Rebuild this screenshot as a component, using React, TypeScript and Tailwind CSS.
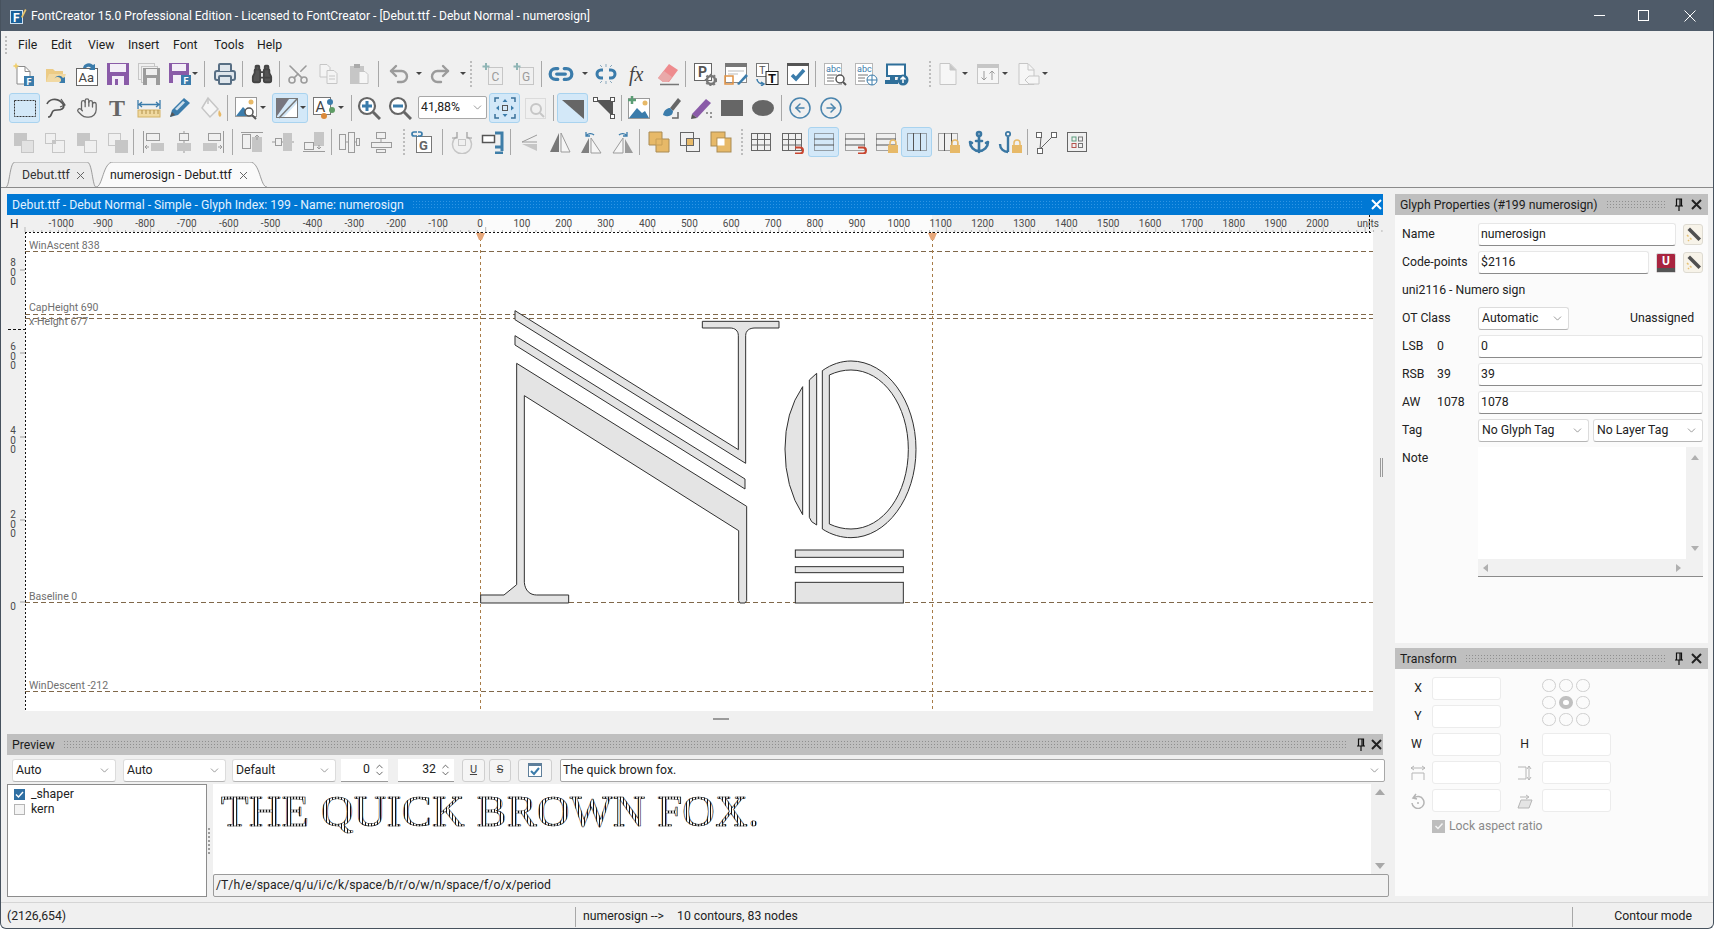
import type { ReactNode } from 'react';
import { Anchor, Binoculars, ChevronDown, ChevronUp, CircleArrowLeft, CircleArrowRight, Hand, Link2, Printer, Scissors, Undo2, Redo2 } from 'lucide-react';

const G = '#c6c6c6';
const L = '#9b9b9b';
const B = '#3b7cab';
const P = '#8a5ba8';
const Y = '#e7b968';

function Svg({ children }: { children: ReactNode }) {
  return (
    <svg width="24" height="24" viewBox="0 0 24 24" fill="none">
      {children}
    </svg>
  );
}

const Lock = () => (
  <>
    <path d="M16 15v-2a3 3 0 0 1 6 0v2" stroke={Y} strokeWidth="1.5" />
    <rect x="14" y="15" width="10" height="8" fill={Y} />
  </>
);
const Magnet = () => <path d="M15 17.500h5a3 3 0 0 1 0 6h-5" stroke="#c8452f" strokeWidth="2" />;
const GridH = () => (
  <>
    <rect x="2.500" y="3.500" width="19" height="17" stroke="#555" strokeDasharray="1 1" />
    <path d="M2 9h20M2 15h20" stroke="#555" />
  </>
);
const GridV = () => (
  <>
    <rect x="2.500" y="3.500" width="19" height="17" stroke="#555" strokeDasharray="1 1" />
    <path d="M8.500 3v18M15.500 3v18" stroke="#555" />
  </>
);
const Grid = () => (
  <>
    <rect x="2.500" y="3.500" width="19" height="17" stroke="#666" />
    <path d="M2 9.500h20M2 15h20M8.500 3v18M15.500 3v18" stroke="#666" />
  </>
);

const icons: Record<string, ReactNode> = {
  new: (
    <Svg>
      <g transform="translate(-2 0)">
        <path d="M6 4.500h8l5 5V22H6z" fill="#fff" stroke="#8a8a8a" />
        <path d="M14 4.500v5h5" stroke="#8a8a8a" />
        <path d="M5 0.500l1 2.500 2.500 1-2.500 1-1 2.500-1-2.500L1.500 4l2.500-1z" fill="#f1cf6b" />
        <rect x="13" y="14" width="10" height="10" fill={B} />
        <text x="15.500" y="22.500" fontSize="9" fontWeight="700" fill="#fff">F</text>
      </g>
    </Svg>
  ),
  open: (
    <Svg>
      <path d="M2 7h7l2 2h8v11H2z" fill="#eccb85" />
      <path d="M2 20l3-8h17l-3 8z" fill="#f1d9a3" />
      <path d="M10 18a5 5 0 0 1 9-2l2-1v6h-6l2-2a3 3 0 0 0-7-1z" fill={B} />
    </Svg>
  ),
  font: (
    <Svg>
      <rect x="1.500" y="6.500" width="21" height="17" fill="#fff" stroke="#666" />
      <text x="3.500" y="20" fontSize="13" fill="#444">Aa</text>
      <path d="M8 6a6 6 0 0 1 10-3l2-1v6h-6l2-2a3 3 0 0 0-5 0z" fill={B} />
    </Svg>
  ),
  save: (
    <Svg>
      <path d="M1 1h22v22H1z" fill={P} />
      <rect x="4" y="2" width="16" height="8" fill="#f3eef7" />
      <rect x="6" y="14" width="12" height="9" fill="#f3eef7" />
      <rect x="9" y="17" width="3" height="6" fill={P} />
    </Svg>
  ),
  saveAll: (
    <Svg>
      <rect x="1.500" y="1.500" width="16" height="16" stroke={G} />
      <rect x="4.500" y="4.500" width="16" height="16" fill="#f0f0f0" stroke={G} />
      <rect x="6" y="6" width="17" height="17" fill={L} />
      <rect x="9" y="7" width="11" height="6" fill="#eee" />
      <rect x="10" y="16" width="9" height="7" fill="#eee" />
    </Svg>
  ),
  saveF: (
    <Svg>
      <path d="M1 1h20v20H1z" fill={P} />
      <rect x="4" y="2" width="14" height="7" fill="#f3eef7" />
      <rect x="5" y="13" width="9" height="8" fill="#f3eef7" />
      <rect x="13" y="13" width="10" height="10" fill={B} />
      <text x="15.500" y="21.500" fontSize="9" fontWeight="700" fill="#fff">F</text>
    </Svg>
  ),
  print: <Printer size={24} color="#586f84" fill="#dfe6ec" strokeWidth={2} />,
  binoc: <Binoculars size={22} color="#444" fill="#555" strokeWidth={2} />,
  cut: <Scissors size={24} color={L} strokeWidth={1.6} className="-rotate-90" />,
  copy: (
    <Svg>
      <path d="M3 2.500h7l3 3V15H3z" stroke={G} fill="#f4f4f4" />
      <path d="M10 8.500h7l3 3v10H10z" stroke={G} fill="#f4f4f4" />
      <path d="M12 14h6M12 17h6" stroke={G} />
    </Svg>
  ),
  paste: (
    <Svg>
      <rect x="2" y="4" width="14" height="18" fill={G} />
      <rect x="6" y="2" width="6" height="4" fill="#aaa" />
      <path d="M11 9.500h6l3 3v9H11z" stroke={G} fill="#f6f6f6" />
    </Svg>
  ),
  undo: <Undo2 size={24} color={L} strokeWidth={2.4} />,
  redo: <Redo2 size={24} color={L} strokeWidth={2.4} />,
  pageC: (
    <Svg>
      <rect x="7.500" y="5.500" width="14" height="17" stroke={G} />
      <path d="M5 1v7M1.500 4.500h7" stroke="#8fb5b5" strokeWidth="2" />
      <text x="10.500" y="19" fontSize="12" fill={L}>C</text>
    </Svg>
  ),
  pageG: (
    <Svg>
      <rect x="7.500" y="5.500" width="14" height="17" stroke={G} />
      <path d="M5 1v7M1.500 4.500h7" stroke="#8fb5b5" strokeWidth="2" />
      <text x="10" y="19" fontSize="12" fill={L}>G</text>
    </Svg>
  ),
  link: <Link2 size={26} color={B} strokeWidth={3} />,
  unlink: (
    <Svg>
      <path d="M9 9H7a4 4 0 0 0 0 8h2M15 9h2a4 4 0 0 1 0 8h-2" stroke={B} strokeWidth="3" transform="translate(0 -1)" />
      <path d="M12 2v3M6 3l2 2M18 3l-2 2M12 19v3M6 21l2-2M18 21l-2-2" stroke="#8aa8bd" />
    </Svg>
  ),
  fx: (
    <Svg>
      <text x="4" y="19" fontSize="20" fontStyle="italic" fontFamily="Liberation Serif, serif" fill="#444">fx</text>
    </Svg>
  ),
  eraser: (
    <Svg>
      <path d="M13 2l9 6-9 12H7l-5-4z" fill="#ee8b8e" />
      <path d="M2 16l6-7 8 6-4 5H7z" fill="#e9a9a9" />
      <path d="M4 22.500h19" stroke="#777" strokeWidth="1.500" />
    </Svg>
  ),
  props: (
    <Svg>
      <rect x="1.500" y="1.500" width="17" height="17" fill="#fff" stroke="#666" />
      <text x="5" y="15" fontSize="14" fontWeight="700" fill="#555">P</text>
      <circle cx="18" cy="18" r="4" stroke="#777" strokeWidth="2.500" />
      <circle cx="18" cy="18" r="5.500" stroke="#777" strokeDasharray="2 2" strokeWidth="1.500" />
    </Svg>
  ),
  form: (
    <Svg>
      <rect x="1.500" y="1.500" width="21" height="19" fill="#fff" stroke="#888" />
      <rect x="1" y="1" width="22" height="4" fill="#777" />
      <path d="M4 9h16M4 12h10" stroke="#bbb" />
      <rect x="1" y="14" width="8" height="8" stroke="#e19244" strokeWidth="1.500" />
      <path d="M13 22l9-10 2 2-9 9z" fill={B} />
    </Svg>
  ),
  tt: (
    <Svg>
      <rect x="1.500" y="1.500" width="12" height="13" fill="#fff" stroke="#777" />
      <text x="4" y="12" fontSize="11" fill="#555">T</text>
      <rect x="11" y="9.500" width="12" height="13" fill="#fff" stroke="#222" />
      <text x="13" y="21" fontSize="13" fontWeight="700" fill="#111">T</text>
      <path d="M2 17c0 3 3 5 7 5M6 20l3 2-3 2" stroke={B} strokeWidth="1.500" />
    </Svg>
  ),
  check: (
    <Svg>
      <rect x="1.500" y="1.500" width="21" height="21" fill="#fff" stroke="#666" />
      <rect x="1" y="1" width="22" height="3" fill="#555" />
      <path d="M6 13l4 4 8-9" stroke={B} strokeWidth="3.500" />
    </Svg>
  ),
  abcS: (
    <Svg>
      <rect x="1.500" y="1.500" width="17" height="21" stroke="#777" strokeDasharray="1 1" fill="#fff" />
      <text x="3" y="10" fontSize="9" fill={B}>abc</text>
      <path d="M4 13h10M4 16h7M4 19h7" stroke="#777" />
      <circle cx="17" cy="17" r="4" fill="#fff" stroke="#555" strokeWidth="1.500" />
      <path d="M20 20l3 3" stroke="#555" strokeWidth="2" />
    </Svg>
  ),
  abcW: (
    <Svg>
      <rect x="1.500" y="1.500" width="17" height="21" stroke="#777" strokeDasharray="1 1" fill="#fff" />
      <text x="3" y="10" fontSize="9" fill={B}>abc</text>
      <path d="M4 13h10M4 16h7M4 19h7" stroke="#777" />
      <circle cx="18" cy="18" r="5" fill="#fff" stroke={B} />
      <path d="M13 18h10M18 13v10" stroke={B} />
    </Svg>
  ),
  monitor: (
    <Svg>
      <path d="M2 2.500h18V14H2z" stroke="#2f6f9a" strokeWidth="2" fill="#fff" />
      <rect x="0" y="18" width="13" height="4" fill="#2f6f9a" />
      <rect x="5" y="15" width="5" height="3" fill="#2f6f9a" />
      <circle cx="18" cy="18" r="5.500" fill="#2f6f9a" />
      <path d="M18 21v-6M15.500 17.500L18 15l2.500 2.500" stroke="#fff" strokeWidth="1.500" />
    </Svg>
  ),
  doc: (
    <Svg>
      <path d="M4 1.500h10l6 6v15H4z" fill="#f6f6f6" stroke={G} />
      <path d="M14 2v6h6" stroke={G} fill={G} />
    </Svg>
  ),
  updown: (
    <Svg>
      <rect x="1.500" y="3.500" width="21" height="18" stroke={G} fill="#f6f6f6" />
      <rect x="1" y="2" width="22" height="4" fill={G} />
      <path d="M8 9v9M5.500 15.500L8 18l2.500-2.500M16 18V9M13.500 11.500L16 9l2.500 2.500" stroke={L} />
    </Svg>
  ),
  docTag: (
    <Svg>
      <path d="M3 1.500h9l6 6v15H3z" fill="#f6f6f6" stroke={G} />
      <path d="M12 2v6h6" stroke={G} />
      <path d="M9 18l4-4h10v8H13z" fill="#f6f6f6" stroke={G} />
    </Svg>
  ),
  select: (
    <Svg>
      <rect x="1.500" y="4.500" width="21" height="16" stroke="#333" strokeDasharray="2 1" />
    </Svg>
  ),
  lasso: (
    <Svg>
      <path d="M3 8c2-5 9-6 13-3s5 6 2 8-7 0-9 2-1 6-5 6" stroke="#555" strokeWidth="1.700" />
      <path d="M17 3l4 6-5 2" stroke="#555" strokeWidth="1.200" />
    </Svg>
  ),
  hand: <Hand size={22} color="#666" strokeWidth={1.4} />,
  bigT: (
    <Svg>
      <text x="3" y="20" fontSize="24" fontWeight="700" fontFamily="Liberation Serif, serif" fill="#666">T</text>
    </Svg>
  ),
  measure: (
    <Svg>
      <path d="M1 4v9M23 4v9M2 8.500h20M5 6L2 8.500 5 11M19 6l3 2.500L19 11" stroke={B} strokeWidth="1.300" />
      <rect x="1" y="14" width="22" height="7" fill="#f0d9a0" stroke="#d3b264" />
      <path d="M5 14v4M9 14v4M13 14v4M17 14v4M21 14v4" stroke="#b0904a" />
    </Svg>
  ),
  pen: (
    <Svg>
      <path d="M2 21l2-7L16 2l6 5-12 12z" fill={B} />
      <path d="M7 13l8-8 2 1.500-8 8z" fill="#cfe0ec" />
      <path d="M2 21l2-5 3 3z" fill="#555" />
    </Svg>
  ),
  bucket: (
    <Svg>
      <path d="M9 2l10 11-8 8-8-9z" stroke={G} strokeWidth="1.500" fill="#f6f6f6" />
      <path d="M20 14c2 3 3 4 2 6s-4 0-2-6z" fill={Y} />
      <path d="M9 2v6" stroke={G} strokeWidth="1.500" />
    </Svg>
  ),
  imgZoom: (
    <Svg>
      <rect x="1.500" y="1.500" width="21" height="19" stroke="#999" fill="#fff" />
      <path d="M2 20l7-9 4 4 3-2v7z" fill={B} />
      <circle cx="17" cy="6" r="2.500" fill={Y} />
      <circle cx="15" cy="16" r="4" fill="#fff" stroke="#555" strokeWidth="1.500" />
      <path d="M18 19l4 4" stroke="#555" strokeWidth="2" />
    </Svg>
  ),
  fillMode: (
    <Svg>
      <rect x="1.500" y="2.500" width="21" height="19" stroke="#777" />
      <path d="M2 3h12L2 20z" fill="#77767f" />
      <path d="M22 7v14H9z" fill="#fff" />
      <path d="M4 22L22 3" stroke="#777" strokeWidth="1.500" />
    </Svg>
  ),
  aColor: (
    <Svg>
      <rect x="1.500" y="1.500" width="17" height="17" fill="#fff" stroke="#777" />
      <text x="3.500" y="15.500" fontSize="15" fill="#444">A</text>
      <circle cx="18" cy="6" r="3" fill={B} />
      <circle cx="20" cy="14" r="3" fill="#5f9d65" />
      <circle cx="12" cy="20" r="3" fill="#db8a3a" />
    </Svg>
  ),
  zoomIn: (
    <Svg>
      <circle cx="10" cy="10" r="8" fill="#fff" stroke="#666" strokeWidth="2.200" />
      <path d="M16 16l7 7" stroke="#666" strokeWidth="3" />
      <path d="M10 5v10M5 10h10" stroke={B} strokeWidth="3" />
    </Svg>
  ),
  zoomOut: (
    <Svg>
      <circle cx="10" cy="10" r="8" fill="#fff" stroke="#666" strokeWidth="2.200" />
      <path d="M16 16l7 7" stroke="#666" strokeWidth="3" />
      <path d="M5 10h10" stroke={B} strokeWidth="3" />
    </Svg>
  ),
  fit: (
    <Svg>
      <path d="M2 6V2h4M18 2h4v4M22 18v4h-4M6 22H2v-4" stroke="#3a7099" strokeWidth="1.500" />
      <rect x="9.500" y="9.500" width="5" height="5" stroke="#555" />
      <path d="M12 3l2.500 3h-5zM12 21l2.500-3h-5zM3 12l3-2.500v5zM21 12l-3-2.500v5z" fill={B} />
    </Svg>
  ),
  zoomBox: (
    <Svg>
      <rect x="1.500" y="2.500" width="20" height="20" stroke={G} strokeDasharray="1 1" />
      <circle cx="12" cy="13" r="5" stroke={G} strokeWidth="2" />
      <path d="M16 17l4 4" stroke={G} strokeWidth="2" />
    </Svg>
  ),
  tri: (
    <Svg>
      <path d="M1 4h22v19z" fill="#666" />
    </Svg>
  ),
  triPts: (
    <Svg>
      <path d="M4 4h17v17z" fill="#555" />
      <rect x="1.500" y="1.500" width="4" height="4" fill="#fff" stroke="#555" />
      <rect x="18.500" y="1.500" width="4" height="4" fill="#fff" stroke="#555" />
      <rect x="18.500" y="18.500" width="4" height="4" fill="#fff" stroke="#555" />
    </Svg>
  ),
  imgAdd: (
    <Svg>
      <rect x="1.500" y="2.500" width="21" height="20" fill="#fff" stroke="#999" />
      <path d="M2 22l8-10 5 5 3-2 4 7z" fill={B} />
      <circle cx="18" cy="7" r="2.500" fill={Y} />
      <path d="M5 0v8M1 4h8" stroke="#5b9d75" strokeWidth="2.500" />
    </Svg>
  ),
  brush: (
    <Svg>
      <path d="M12 12L20 2l3 3-8 10z" fill="#666" />
      <path d="M5 19c1-5 4-7 7-7l3 3c0 4-4 7-10 4z" fill={B} />
      <path d="M14 22h6v-6" stroke="#666" strokeWidth="1.500" />
    </Svg>
  ),
  penP: (
    <Svg>
      <path d="M3 18L17 3l5 4L8 22z" fill={P} />
      <path d="M2 23l1-5 5 4z" fill="#555" />
      <path d="M17 17h2M21 17h2M21 21h2" stroke="#777" strokeWidth="1.500" />
    </Svg>
  ),
  rect: (
    <Svg>
      <rect x="1" y="4" width="22" height="16" fill="#666" />
    </Svg>
  ),
  ellipse: (
    <Svg>
      <ellipse cx="12" cy="12" rx="11" ry="8" fill="#666" />
    </Svg>
  ),
  left: <CircleArrowLeft size={24} color="#4a84ad" strokeWidth={1.5} />,
  right: <CircleArrowRight size={24} color="#4a84ad" strokeWidth={1.5} />,
  ovA: (
    <Svg>
      <rect x="2" y="3" width="13" height="13" fill={G} />
      <rect x="9.500" y="10.500" width="12" height="12" fill="#e2e2e2" stroke={G} />
    </Svg>
  ),
  ovB: (
    <Svg>
      <rect x="2.500" y="3.500" width="10" height="10" stroke={G} />
      <rect x="9.500" y="10.500" width="12" height="12" stroke={G} />
      <rect x="10" y="11" width="3" height="3" fill={G} />
    </Svg>
  ),
  ovC: (
    <Svg>
      <rect x="2" y="3" width="13" height="13" fill={G} />
      <rect x="9.500" y="10.500" width="12" height="12" stroke={G} fill="#f0f0f0" />
    </Svg>
  ),
  ovD: (
    <Svg>
      <rect x="2.500" y="3.500" width="12" height="12" stroke={G} />
      <rect x="9" y="10" width="13" height="13" fill={G} />
    </Svg>
  ),
  alL: (
    <Svg>
      <path d="M2.500 1v22" stroke={L} />
      <rect x="5.500" y="3.500" width="13" height="7" stroke={L} />
      <rect x="10" y="13" width="13" height="8" fill={G} />
      <path d="M8 17H4M6 15l-2 2 2 2" stroke={L} />
    </Svg>
  ),
  alC: (
    <Svg>
      <path d="M12 1v22" stroke={L} />
      <rect x="7.500" y="3.500" width="9" height="7" fill="#f0f0f0" stroke={L} />
      <rect x="5" y="13" width="14" height="8" fill={G} />
    </Svg>
  ),
  alR: (
    <Svg>
      <path d="M21.500 1v22" stroke={L} />
      <rect x="6.500" y="3.500" width="12" height="7" stroke={L} />
      <rect x="1" y="13" width="14" height="8" fill={G} />
      <path d="M16 17h4M18 15l2 2-2 2" stroke={L} />
    </Svg>
  ),
  alT: (
    <Svg>
      <path d="M1 2.500h22" stroke={L} />
      <rect x="2.500" y="4.500" width="8" height="14" stroke={L} />
      <rect x="12" y="7" width="10" height="15" fill={G} />
      <path d="M17 10V5M15 7l2-2 2 2" stroke={L} />
    </Svg>
  ),
  alM: (
    <Svg>
      <path d="M1 12h22" stroke={L} />
      <rect x="4.500" y="8.500" width="6" height="7" fill="#f0f0f0" stroke={L} />
      <rect x="12" y="3" width="9" height="18" fill={G} />
    </Svg>
  ),
  alB: (
    <Svg>
      <path d="M1 21.500h22" stroke={L} />
      <rect x="2.500" y="12.500" width="9" height="7" stroke={L} />
      <rect x="12" y="2" width="10" height="14" fill={G} />
      <path d="M17 15v4M15 17l2 2 2-2" stroke={L} />
    </Svg>
  ),
  dist1: (
    <Svg>
      <rect x="2.500" y="4.500" width="6" height="15" stroke={L} />
      <rect x="11.500" y="2.500" width="6" height="20" stroke={L} />
      <rect x="19.500" y="8.500" width="3" height="7" stroke={L} />
      <path d="M8 12h3M17 12h3" stroke={L} />
    </Svg>
  ),
  dist2: (
    <Svg>
      <rect x="7.500" y="2.500" width="9" height="6" stroke={L} />
      <rect x="2.500" y="12.500" width="20" height="5" stroke={L} />
      <rect x="7.500" y="19.500" width="9" height="3" stroke={L} />
      <path d="M12 8v4" stroke={L} />
    </Svg>
  ),
  linkG: (
    <Svg>
      <rect x="6.500" y="6.500" width="15" height="16" stroke="#777" fill="#fff" />
      <text x="9" y="20" fontSize="13" fontWeight="700" fill="#666">G</text>
      <path d="M2 4a2 2 0 0 1 2-2h3M12 4a2 2 0 0 0-2-2H8M2 4a2 2 0 0 0 2 2h3M12 4a2 2 0 0 1-2 2H8" stroke={B} strokeWidth="1.700" />
    </Svg>
  ),
  round: (
    <Svg>
      <path d="M6 7a9.500 9.500 0 1 0 12 0" stroke={G} strokeWidth="1.500" />
      <rect x="8.500" y="9.500" width="7" height="6" stroke={G} />
      <path d="M7 2v6H2M17 2v6h5" stroke={L} strokeWidth="1.200" />
    </Svg>
  ),
  clamp: (
    <Svg>
      <rect x="1.500" y="5.500" width="12" height="7" stroke="#555" strokeWidth="1.500" fill="#fff" />
      <path d="M14 3h7v18M14 17h7M14 23h8" stroke="#3f7ea8" strokeWidth="3" />
    </Svg>
  ),
  triL: (
    <Svg>
      <path d="M20 5L5 12h15" stroke={L} />
      <path d="M20 14H5l15 7z" fill={G} />
    </Svg>
  ),
  triM: (
    <Svg>
      <path d="M11 3v19H2z" fill="#777" />
      <path d="M13 3v19h9z" stroke={L} fill="#f6f6f6" />
    </Svg>
  ),
  triRot1: (
    <Svg>
      <path d="M10 8v15H2z" fill="#808080" />
      <path d="M12 8v15h10z" fill="#f6f6f6" stroke={L} />
      <path d="M7 6c2-3 6-3 8-1M7 2v4h4" stroke={B} strokeWidth="1.300" />
    </Svg>
  ),
  triRot2: (
    <Svg>
      <path d="M13 8v15H3z" stroke={L} fill="#f6f6f6" />
      <path d="M15 9v14h8z" fill="#9a9a9a" />
      <path d="M17 6c-2-3-6-3-8-1M17 2v4h-4" stroke={B} strokeWidth="1.300" />
    </Svg>
  ),
  union: (
    <Svg>
      <path d="M2 2h13v7h7v13H9v-7H2z" fill={Y} stroke="#a98b55" />
      <path d="M9 9h6v6H9z" stroke="#c79f57" />
    </Svg>
  ),
  inter: (
    <Svg>
      <rect x="2.500" y="2.500" width="13" height="13" stroke="#666" />
      <rect x="8.500" y="8.500" width="13" height="13" stroke="#666" />
      <rect x="9" y="9" width="6" height="6" fill={Y} />
    </Svg>
  ),
  excl: (
    <Svg>
      <rect x="2" y="2" width="14" height="14" fill={Y} stroke="#a98b55" />
      <rect x="8" y="8" width="14" height="14" fill={Y} stroke="#a98b55" />
      <rect x="8.500" y="8.500" width="7" height="7" fill="#fff" />
    </Svg>
  ),
  grid: <Svg><Grid /></Svg>,
  gridMag: <Svg><Grid /><Magnet /></Svg>,
  gridH: <Svg><GridH /></Svg>,
  gridHMag: <Svg><GridH /><Magnet /></Svg>,
  gridHLock: <Svg><GridH /><Lock /></Svg>,
  gridV: <Svg><GridV /></Svg>,
  gridVLock: <Svg><GridV /><Lock /></Svg>,
  anchor: <Anchor size={24} color="#3a77a3" strokeWidth={2.6} />,
  anchorLock: (
    <Svg>
      <circle cx="10" cy="4" r="2.200" stroke="#3a77a3" strokeWidth="1.700" />
      <path d="M10 7v15M2 14c0 5 4 8 8 8" stroke="#3a77a3" strokeWidth="2.400" />
      <Lock />
    </Svg>
  ),
  nodes: (
    <Svg>
      <path d="M7 7l-1 12L20 5" stroke="#666" />
      <rect x="2.500" y="2.500" width="5" height="5" fill="#fff" stroke="#666" />
      <rect x="3.500" y="18.500" width="5" height="5" fill="#fff" stroke="#666" />
      <rect x="17.500" y="2.500" width="5" height="5" fill="#fff" stroke="#666" />
    </Svg>
  ),
  matrix: (
    <Svg>
      <rect x="2.500" y="2.500" width="19" height="19" stroke="#666" />
      <rect x="7" y="7" width="4" height="4" stroke="#5a9b7c" />
      <rect x="13.500" y="7" width="4" height="4" stroke="#777" />
      <rect x="7" y="13.500" width="4" height="4" stroke="#b3534b" />
      <rect x="13.500" y="13.500" width="4" height="4" stroke="#777" />
    </Svg>
  ),
};

function Btn({ n, on, c = '' }: { n: string; on?: boolean; c?: string }) {
  return (
    <div
      className={`flex h-[30px] w-[31px] shrink-0 items-center justify-center rounded-[3px] border ${
        on ? 'border-[#a9d3ef] bg-[#d3e8f8]' : 'border-transparent'
      } ${c}`}
    >
      {icons[n]}
    </div>
  );
}

function Caret({ c = '' }: { c?: string }) {
  return (
    <div className={`flex w-[8px] shrink-0 justify-center ${c}`}>
      <div className="h-0 w-0 border-x-[3px] border-t-[3px] border-x-transparent border-t-[#444]" />
    </div>
  );
}

function Sep({ c = '' }: { c?: string }) {
  return <div className={`h-[26px] w-px shrink-0 bg-[#a8a8a8] ${c}`} />;
}

function Dots({ c = '' }: { c?: string }) {
  return <div className={`h-[26px] w-[2px] shrink-0 border-l-2 border-dotted border-[#bdbdbd] ${c}`} />;
}

function Bar({ children, c = '' }: { children: ReactNode; c?: string }) {
  return <div className={`flex h-[34px] items-center pl-[8px] ${c}`}>{children}</div>;
}

function Pin() {
  return (
    <svg width="10" height="14" viewBox="0 0 10 14" fill="none">
      <path d="M2.500 1h5v7h-5zM1 8h8M5 8v5M6 1v7" stroke="#111" strokeWidth="1.200" />
    </svg>
  );
}

function CloseX({ color = '#222' }: { color?: string }) {
  return (
    <svg width="11" height="11" viewBox="0 0 11 11" fill="none">
      <path d="M1 1l9 9M10 1l-9 9" stroke={color} strokeWidth="2" />
    </svg>
  );
}

function PanelHead({ title, c = 'pr-[6px]', g = 'mr-[7px]' }: { title: string; c?: string; g?: string }) {
  return (
    <div className={`flex h-[21px] shrink-0 items-center bg-[#bfbfbf] pl-[5px] text-[#1c1c1c] ${c}`}>
      <span className="pt-[2px]">{title}</span>
      <div className="mx-[8px] h-[9px] flex-1 bg-[radial-gradient(#8f8f8f_0.6px,transparent_0.8px)] bg-size-[3px_3px]" />
      <div className={`flex w-[10px] justify-center ${g}`}><Pin /></div>
      <CloseX />
    </div>
  );
}

function Input({ value = '', c = '' }: { value?: string; c?: string }) {
  return (
    <div className={`flex h-[23px] items-center rounded-[3px] border border-[#e7e7e7] border-b-[#8b8b8b] bg-white pl-[2px] text-[#222] ${c}`}>
      {value}
    </div>
  );
}

function Box({ c = '' }: { c?: string }) {
  return <div className={`h-[23px] w-[69px] rounded-[3px] border border-[#ececec] bg-white ${c}`} />;
}

function Combo({ value, c = '' }: { value: string; c?: string }) {
  return (
    <div className={`flex h-[23px] items-center justify-between rounded-[3px] border border-[#dcdcdc] border-b-[#b5b5b5] bg-white pl-[3px] pr-[4px] text-[#222] ${c}`}>
      <span>{value}</span>
      <ChevronDown size={13} color="#666" strokeWidth={1.2} />
    </div>
  );
}

function Wand() {
  return (
    <div className="flex h-[21px] w-[20px] items-center justify-center rounded-[3px] border border-[#dedbd2] bg-[#f7f3e9]">
      <svg width="17" height="17" viewBox="0 0 17 17" fill="none">
        <path d="M5 1.500l11 11-2.500 2.500L2.500 4z" fill="#4f4f4f" />
        <path d="M2 9l1.500 1.500M5 12l1.500 1.500M3 14l1 1" stroke="#e7c274" strokeWidth="1.500" />
      </svg>
    </div>
  );
}

function Row({ label, value, input }: { label: string; value: string; input: string }) {
  return (
    <div className="flex h-[23px] items-center">
      <span className="w-[35px]">{label}</span>
      <span className="w-[41px]">{value}</span>
      <Input value={input} c="w-[225px]" />
    </div>
  );
}

const rulerMarks = Array.from({ length: 31 }, (_, i) => -1000 + i * 100);
const minorTicks = Array.from({ length: 164 }, (_, i) => 25 + i * 8.376);
const guides = [252.5, 315.5, 319.5, 603.5, 692.5];
const guideNames: [string, number][] = [
  ['WinAscent 838', 250],
  ['CapHeight 690', 312],
  ['x-Height 677', 326],
  ['Baseline 0', 601],
  ['WinDescent -212', 690],
];
const vertMarks: [string, number][] = [
  ['800', 273],
  ['600', 357],
  ['400', 441],
  ['200', 525],
];
const ux = (u: number) => 480 + u * 0.4188;

function GlyphShape() {
  return (
    <g fill="#e4e4e4" stroke="#2f2f2f" strokeWidth="3" transform="translate(470 300) scale(0.33333)">
      <path d="M135 35L805 452V110C805 95 795 87 780 87H697V67H927V87H855C838 87 827 95 827 110V493L135 62Z" />
      <path d="M135 110L825 540V570L135 138Z" />
      <path d="M140 193L830 622V905L825 912H810L806 905V695L163 290V850C165 875 180 888 200 888H296V912H32V888H102L140 857Z" />
      <path d="M998 263Q945 340 945 450Q945 565 998 647Z" />
      <path d="M1018 243L1040 223V678L1025 668L1018 655Z" />
      <path
        fillRule="evenodd"
        d="M1057 215C1085 195 1115 186 1143 186C1250 186 1338 305 1338 451C1338 597 1250 716 1143 716C1115 716 1085 708 1057 690ZM1078 228V675C1100 685 1120 690 1143 690C1240 690 1315 585 1315 451C1315 320 1240 213 1143 213C1120 213 1100 218 1078 228Z"
      />
      <rect x="976" y="753" width="324" height="22" />
      <rect x="976" y="803" width="324" height="18" />
      <rect x="976" y="850" width="324" height="62" />
    </g>
  );
}

// ruler plus edit area, drawn in window coordinates
function GlyphCanvas() {
  return (
    <svg className="block" width="1376" height="496" viewBox="7 216 1376 496" fontSize="10">
      <rect x="7" y="216" width="1376" height="496" fill="#f0f0f0" />
      <rect x="480" y="216" width="452" height="17" fill="#fbfbfb" />
      <rect x="25" y="233" width="1348" height="479" fill="#fff" />
      {minorTicks.map((x, i) => (
        <path key={i} d={`M${x} ${i % 5 === 0 ? 228 : 231}V233`} stroke="#b9b9b9" />
      ))}
      {rulerMarks.map((u) => (
        <text key={u} x={ux(u)} y="228" textAnchor="middle" fill="#4a4a4a">
          {u}
        </text>
      ))}
      <text x="1368" y="228" textAnchor="middle" fill="#4a4a4a">units</text>
      <text x="10" y="229" fontSize="12" fill="#222">H</text>
      {vertMarks.map(([label, y]) =>
        label.split('').map((d, i) => (
          <text key={i + label} x="13" y={y - 6 + i * 9.500} textAnchor="middle" fill="#4a4a4a">
            {d}
          </text>
        )),
      )}
      <text x="13" y="611" textAnchor="middle" fill="#4a4a4a">0</text>
      {[271, 354, 438, 521, 603].map((y) => (
        <path key={y} d={`M20 ${y}H25`} stroke="#a0a0a0" />
      ))}
      <path d="M25 233.500H1373" stroke="#111" strokeDasharray="2 2" />
      <path d="M25.500 233V712" stroke="#111" strokeDasharray="2 2" />
      <path d="M8 330.500H25" stroke="#111" strokeDasharray="3 2" />
      <path d="M1369.500 216V233" stroke="#111" strokeDasharray="2 2" />
      {guides.map((y) => (
        <path key={y} d={`M25 ${y}H1373`} stroke="#80684a" strokeDasharray="5 3" />
      ))}
      <path d="M480.500 233V712M932.500 233V712" stroke="#a87c48" strokeDasharray="3 3" />
      <path d="M476 234h9l-3 7h-3zM928 234h9l-3 7h-3z" fill="#e6a679" />
      <path d="M1380.500 459V478M1382.500 459V478" stroke="#9a9a9a" />
      <GlyphShape />
      {guideNames.map(([name, y]) => (
        <text key={name} x="29" y={y} fontSize="10.500" fill="#6f6f6f">
          {name}
        </text>
      ))}
    </svg>
  );
}

function TabShape({ active }: { active?: boolean }) {
  return (
    <svg className="absolute inset-0 h-full w-full" viewBox="0 0 100 25" preserveAspectRatio="none" fill="none">
      <path
        d="M0 25C4 25 4 0 10 0H90C96 0 96 25 100 25"
        fill={active ? '#fafafa' : '#ececec'}
        stroke="#9c9c9c"
        strokeWidth="1"
        vectorEffect="non-scaling-stroke"
      />
    </svg>
  );
}

export default function App() {
  return (
    <div className="flex h-[929px] w-[1714px] flex-col overflow-hidden rounded-b-[6px] border-x border-b border-[#47525e] bg-[#f0f0f0] font-['Roboto',sans-serif] text-[12.250px] text-[#222]">
      {/* title bar */}
      <div className="-mx-px flex h-[31px] shrink-0 items-center bg-[#4f5b69] text-[12.100px] text-white">
        <svg className="ml-[9px] mr-[4px]" width="18" height="18" viewBox="0 0 18 18">
          <rect x="1.500" y="3.500" width="12" height="13" fill="#1b5f97" stroke="#cfe0ee" />
          <text x="4" y="14.500" fontSize="12" fontWeight="700" fill="#fff">F</text>
          <path d="M12 10L16 2l1.500 1-4 8z" fill="#e8c46a" />
        </svg>
        <span className="pt-[2px]">FontCreator 15.0 Professional Edition - Licensed to FontCreator - [Debut.ttf - Debut Normal - numerosign]</span>
        <div className="ml-auto flex items-center pr-[18px]">
          <div className="h-px w-[11px] bg-white" />
          <div className="ml-[33px] h-[11px] w-[11px] border border-white" />
          <div className="ml-[35px]">
            <svg width="12" height="12" viewBox="0 0 12 12" fill="none">
              <path d="M0.500 0.500l11 11M11.500 0.500l-11 11" stroke="#fff" />
            </svg>
          </div>
        </div>
      </div>

      {/* menu */}
      <div className="flex h-[26px] shrink-0 items-center pt-[2px] text-[#1c1c1c]">
        <div className="ml-[4px] mr-[11px] h-[18px] w-[2px] border-l-2 border-dotted border-[#bdbdbd]" />
        <span className="w-[33px]">File</span>
        <span className="w-[37px]">Edit</span>
        <span className="w-[40px]">View</span>
        <span className="w-[45px]">Insert</span>
        <span className="w-[41px]">Font</span>
        <span className="w-[43px]">Tools</span>
        <span>Help</span>
      </div>

      {/* toolbars */}
      <Bar>
        <Btn n="new" /><Btn n="open" /><Btn n="font" /><Btn n="save" /><Btn n="saveAll" /><Btn n="saveF" />
        <Caret c="-ml-[4px]" />
        <Sep c="ml-[5px] mr-[4px]" />
        <Btn n="print" />
        <Sep c="ml-[2px] mr-[3px]" />
        <Btn n="binoc" />
        <Sep c="ml-[2px] mr-[2px]" />
        <Btn n="cut" /><Btn n="copy" /><Btn n="paste" />
        <Sep c="ml-[3px] mr-[4px]" />
        <Btn n="undo" />
        <Caret c="w-[10px]" />
        <Btn n="redo" />
        <Caret c="w-[16px]" />
        <Dots c="-ml-[1px] mr-[5px]" />
        <Btn n="pageC" /><Btn n="pageG" />
        <Sep c="ml-[2px] mr-[3px]" />
        <Btn n="link" />
        <Caret c="ml-[5px] mr-[1px]" />
        <Btn n="unlink" /><Btn n="fx" /><Btn n="eraser" />
        <Sep c="ml-[2px] mr-[3px]" />
        <Btn n="props" /><Btn n="form" /><Btn n="tt" /><Btn n="check" />
        <Sep c="ml-[2px] mr-[3px]" />
        <Btn n="abcS" /><Btn n="abcW" /><Btn n="monitor" />
        <Dots c="ml-[17px] mr-[1px]" />
        <Btn n="doc" />
        <Caret c="-ml-[2px]" />
        <Btn n="updown" c="ml-[3px]" />
        <Caret c="-ml-[2px]" />
        <Btn n="docTag" c="ml-[3px]" />
        <Caret c="-ml-[2px]" />
      </Bar>
      <Bar>
        <Btn n="select" on c="w-[30px]" />
        <Btn n="lasso" /><Btn n="hand" /><Btn n="bigT" /><Btn n="measure" /><Btn n="pen" /><Btn n="bucket" />
        <Sep c="ml-[1px] mr-[2px]" />
        <Btn n="imgZoom" />
        <Caret c="-ml-[2px]" />
        <div className="ml-[5px] flex h-[30px] w-[36px] shrink-0 items-center rounded-[3px] border border-[#a9d3ef] bg-[#d3e8f8] pl-[2px]">
          {icons.fillMode}
          <Caret />
        </div>
        <Btn n="aColor" />
        <Caret c="-ml-[2px]" />
        <Sep c="ml-[6px] mr-px" />
        <Btn n="zoomIn" /><Btn n="zoomOut" />
        <div className="ml-[3px] flex h-[23px] w-[69px] shrink-0 items-center justify-between rounded-[2px] border border-[#a8a8a8] bg-white pl-[2px] pr-[2px]">
          <span>41,88%</span>
          <ChevronDown size={13} color="#666" strokeWidth={1.2} />
        </div>
        <Btn n="fit" on c="ml-[2px] w-[30px]" />
        <Btn n="zoomBox" c="w-[28px]" />
        <Sep c="ml-[2px] mr-[3px]" />
        <Btn n="tri" on c="w-[30px]" />
        <Btn n="triPts" c="w-[30px]" />
        <Sep c="ml-[2px] mr-[1px]" />
        <Btn n="imgAdd" /><Btn n="brush" /><Btn n="penP" /><Btn n="rect" /><Btn n="ellipse" />
        <Sep c="ml-[3px] mr-[2px]" />
        <Btn n="left" /><Btn n="right" />
      </Bar>
      <Bar c="relative top-px">
        <Btn n="ovA" c="-ml-px" /><Btn n="ovB" /><Btn n="ovC" c="ml-px" /><Btn n="ovD" />
        <Sep c="mr-[3px]" />
        <Btn n="alL" /><Btn n="alC" /><Btn n="alR" c="-ml-px" />
        <Sep c="ml-[3px] mr-[3px]" />
        <Btn n="alT" /><Btn n="alM" /><Btn n="alB" />
        <Sep c="ml-[2px] mr-px" />
        <Btn n="dist1" /><Btn n="dist2" c="ml-px" />
        <Dots c="ml-[7px] mr-px" />
        <Btn n="linkG" />
        <Sep c="ml-[5px] mr-[3px]" />
        <Btn n="round" /><Btn n="clamp" />
        <Sep c="ml-[2px] mr-[2px]" />
        <Btn n="triL" /><Btn n="triM" /><Btn n="triRot1" /><Btn n="triRot2" />
        <Sep c="ml-[2px] mr-[3px]" />
        <Btn n="union" /><Btn n="inter" /><Btn n="excl" />
        <Dots c="ml-[5px] mr-[2px]" />
        <Btn n="grid" /><Btn n="gridMag" />
        <Btn n="gridH" on c="ml-px" />
        <Btn n="gridHMag" /><Btn n="gridHLock" />
        <Btn n="gridV" on />
        <Btn n="gridVLock" /><Btn n="anchor" /><Btn n="anchorLock" />
        <Sep c="ml-[2px] mr-[2px]" />
        <Btn n="nodes" c="w-[30px]" /><Btn n="matrix" />
      </Bar>

      {/* tabs */}
      <div className="mt-[4px] flex h-[26px] shrink-0 items-end border-b border-[#8b8b8b] pl-[5px]">
        <div className="relative flex h-[25px] w-[90px] shrink-0 items-center pt-[2px]">
          <TabShape />
          <span className="relative ml-[16px] text-[#333]">Debut.ttf</span>
          <span className="relative ml-[6px]"><CloseTab /></span>
        </div>
        <div className="relative flex h-[25px] w-[171px] shrink-0 items-center pt-[2px]">
          <TabShape active />
          <span className="relative ml-[14px] text-[#222]">numerosign - Debut.ttf</span>
          <span className="relative ml-[7px]"><CloseTab /></span>
        </div>
      </div>

      {/* main area */}
      <div className="mt-[6px] flex shrink-0 pl-[6px]">
        <div className="flex w-[1382px] shrink-0 flex-col">
          <div className="w-[1376px]">
            <div className="flex h-[21px] items-center bg-[#0078d4] pl-[5px] pr-[1px] text-[#e3f2ff]">
              <span className="pt-[2px]">Debut.ttf - Debut Normal - Simple - Glyph Index: 199 - Name: numerosign</span>
              <div className="mx-[8px] h-[9px] flex-1 bg-[radial-gradient(#2f95e4_0.6px,transparent_0.8px)] bg-size-[3px_3px]" />
              <CloseX color="#fff" />
            </div>
            <GlyphCanvas />
            <div className="flex h-[13px] justify-center pl-[52px]">
              <div className="mt-[7px] h-[2px] w-[16px] border-y border-[#9a9a9a]" />
            </div>
          </div>

          <div className="mt-[10px] h-[162px]">
            <div className="w-[1376px]"><PanelHead title="Preview" c="pr-[1px]" g="mr-[5px]" /></div>
            <div className="flex h-[29px] items-center pl-[5px] pb-[2px] pt-[3px]">
              <Combo value="Auto" c="w-[104px]" />
              <Combo value="Auto" c="ml-[7px] w-[103px]" />
              <Combo value="Default" c="ml-[6px] w-[104px]" />
              <Spin value="0" c="ml-[5px] w-[47px]" />
              <Spin value="32" c="ml-[10px] w-[56px]" />
              <ToolBox c="ml-[8px] w-[23px] underline">U</ToolBox>
              <ToolBox c="ml-[4px] w-[22px] line-through">S</ToolBox>
              <ToolBox c="ml-[7px] w-[34px]">
                <svg width="16" height="16" viewBox="0 0 16 16" fill="none">
                  <rect x="1.500" y="1.500" width="13" height="13" fill="#fff" stroke="#5e7f9b" />
                  <rect x="1" y="1" width="14" height="3" fill="#5e7f9b" />
                  <path d="M4 9l3 3 5-6" stroke="#3b7cab" strokeWidth="2" />
                </svg>
              </ToolBox>
              <div className="ml-[8px] flex h-[23px] w-[825px] items-center justify-between rounded-[2px] border border-[#a8a8a8] bg-white pl-[2px] pr-[3px]">
                <span>The quick brown fox.</span>
                <ChevronDown size={13} color="#666" strokeWidth={1.2} />
              </div>
            </div>
            <div className="flex h-[113px]">
              <div className="h-[113px] w-[200px] shrink-0 border border-[#8c8c8c] bg-white pl-[6px] pt-[2px] leading-[15px]">
                <div className="flex items-center gap-[6px]">
                  <div className="flex h-[11px] w-[11px] items-center justify-center bg-[#2f6fa3]">
                    <svg width="9" height="9" viewBox="0 0 9 9" fill="none"><path d="M1 4.500l2.500 2.500L8 2" stroke="#fff" strokeWidth="1.400" /></svg>
                  </div>
                  <span>_shaper</span>
                </div>
                <div className="flex items-center gap-[6px]">
                  <div className="h-[11px] w-[11px] border border-[#b5b5b5] bg-[#f4f4f4]" />
                  <span>kern</span>
                </div>
              </div>
              <div className="ml-[1px] flex w-[5px] items-center">
                <div className="h-[26px] border-l-2 border-dotted border-[#9d9d9d]" />
              </div>
              <div className="flex w-[1176px] flex-col">
                <div className="flex h-[90px]">
                  <div className="h-[90px] w-[1158px] bg-white pl-[8px] pt-[1px]">
                    <div className="w-fit bg-[repeating-linear-gradient(90deg,#111_0_1px,#fff_1px_3px)] bg-clip-text font-['Liberation_Serif',serif] text-[45px] leading-[52px] tracking-[0.3px] text-transparent [-webkit-text-stroke:0.6px_#222]">
                      THE QUICK BROWN FOX.
                    </div>
                  </div>
                  <div className="flex w-[18px] flex-col items-center justify-between py-[5px]">
                    <div className="h-0 w-0 border-x-[5px] border-b-[6px] border-x-transparent border-b-[#a8a8a8]" />
                    <div className="h-0 w-0 border-x-[5px] border-t-[6px] border-x-transparent border-t-[#a8a8a8]" />
                  </div>
                </div>
                <div className="flex h-[23px] items-center rounded-[2px] border border-[#9b9b9b] bg-[#f2f2f2] pl-[2px] text-[#222]">
                  /T/h/e/space/q/u/i/c/k/space/b/r/o/w/n/space/f/o/x/period
                </div>
              </div>
            </div>
          </div>
        </div>

        {/* right panels */}
        <div className="ml-[6px] flex h-[702px] w-[313px] shrink-0 flex-col">
          <PanelHead title="Glyph Properties (#199 numerosign)" />
          <div className="flex h-[428px] flex-col bg-[#fbfbfb] pl-[7px] pr-[5px] pt-[8px]">
            <div className="flex h-[23px] items-center">
              <span className="w-[76px]">Name</span>
              <Input value="numerosign" c="w-[198px]" />
              <div className="ml-[7px]"><Wand /></div>
            </div>
            <div className="mt-[5px] flex h-[23px] items-center">
              <span className="w-[76px]">Code-points</span>
              <Input value="$2116" c="w-[171px]" />
              <div className="ml-[7px] flex h-[20px] w-[20px] flex-col items-center justify-between rounded-[2px] border border-[#d9d9d9] bg-[#a8243f]">
                <span className="text-[12px] font-bold leading-[14px] text-white">U</span>
                <div className="h-[4px] w-full bg-[#555]" />
              </div>
              <div className="ml-[7px]"><Wand /></div>
            </div>
            <div className="mt-[5px] flex h-[23px] items-center">uni2116 - Numero sign</div>
            <div className="mt-[5px] flex h-[23px] items-center">
              <span className="w-[76px]">OT Class</span>
              <Combo value="Automatic" c="w-[91px]" />
              <span className="ml-[61px]">Unassigned</span>
            </div>
            <div className="mt-[5px] flex flex-col gap-[5px]">
              <Row label="LSB" value="0" input="0" />
              <Row label="RSB" value="39" input="39" />
              <Row label="AW" value="1078" input="1078" />
            </div>
            <div className="mt-[5px] flex h-[23px] items-center">
              <span className="w-[76px]">Tag</span>
              <Combo value="No Glyph Tag" c="w-[111px]" />
              <Combo value="No Layer Tag" c="ml-[4px] w-[110px]" />
            </div>
            <div className="mt-[5px] flex">
              <span className="w-[76px] pt-[2px]">Note</span>
              <div className="flex h-[130px] w-[225px] flex-col border-b border-[#8b8b8b] bg-[#f1f1f1]">
                <div className="flex flex-1">
                  <div className="flex-1 bg-white" />
                  <div className="flex w-[17px] flex-col items-center justify-between py-[8px]">
                    <div className="h-0 w-0 border-x-[4px] border-b-[5px] border-x-transparent border-b-[#b0b0b0]" />
                    <div className="h-0 w-0 border-x-[4px] border-t-[5px] border-x-transparent border-t-[#b0b0b0]" />
                  </div>
                </div>
                <div className="flex h-[17px] items-center justify-between px-[5px] pr-[22px]">
                  <div className="h-0 w-0 border-y-[4px] border-r-[5px] border-y-transparent border-r-[#b0b0b0]" />
                  <div className="h-0 w-0 border-y-[4px] border-l-[5px] border-y-transparent border-l-[#b0b0b0]" />
                </div>
              </div>
            </div>
          </div>
          <div className="mt-[5px]"><PanelHead title="Transform" /></div>
          <div className="flex flex-1 flex-col bg-[#fbfbfb] pl-[12px] pt-[8px]">
            <div className="flex">
              <div className="flex flex-col gap-[5px]">
                <div className="flex h-[23px] items-center"><span className="w-[25px] pr-[3px] text-center">X</span><Box /></div>
                <div className="flex h-[23px] items-center"><span className="w-[25px] pr-[3px] text-center">Y</span><Box /></div>
              </div>
              <div className="ml-[41px] grid grid-cols-3 gap-x-[3px] gap-y-[2px] pt-[2px]">
                {Array.from({ length: 9 }, (_, i) => (
                  <div
                    key={i}
                    className={
                      i === 4
                        ? 'h-[13px] w-[14px] rounded-full border-[4px] border-[#c0c0c0] bg-white'
                        : 'h-[13px] w-[14px] rounded-full border border-[#cfcfcf]'
                    }
                  />
                ))}
              </div>
            </div>
            <div className="mt-[5px] flex h-[23px] items-center">
              <span className="w-[25px] pr-[6px] text-center">W</span>
              <Box />
              <span className="w-[41px] pl-[6px] text-center">H</span>
              <Box />
            </div>
            <div className="mt-[5px] flex h-[23px] items-center">
              <div className="flex w-[25px] justify-center pr-[3px]">
                <svg width="16" height="16" viewBox="0 0 16 16" fill="none"><path d="M1 3h14M4 1L1 3l3 2M12 1l3 2-3 2M2 15V8h12v7" stroke="#b5b5b5" /></svg>
              </div>
              <Box />
              <div className="flex w-[41px] justify-center pl-[6px]">
                <svg width="16" height="16" viewBox="0 0 16 16" fill="none"><path d="M12 1v14M10 4l2-3 2 3M10 12l2 3 2-3M1 2h8v12H1" stroke="#b5b5b5" /></svg>
              </div>
              <Box />
            </div>
            <div className="mt-[5px] flex h-[23px] items-center">
              <div className="flex w-[25px] justify-center pr-[3px]">
                <svg width="16" height="16" viewBox="0 0 16 16" fill="none"><path d="M4 5a6 6 0 1 1-2 5M6 1L3 5l4 1" stroke="#b5b5b5" strokeWidth="1.500" /><circle cx="8" cy="10" r="1" fill="#b5b5b5" /></svg>
              </div>
              <Box />
              <div className="flex w-[41px] justify-center pl-[6px]">
                <svg width="16" height="16" viewBox="0 0 16 16" fill="none"><path d="M4 7h11l-3 8H1z" fill="#e4e4e4" stroke="#b5b5b5" /><path d="M3 4h8M9 2l3 2-3 2" stroke="#b5b5b5" /></svg>
              </div>
              <Box />
            </div>
            <div className="ml-[25px] mt-[5px] flex items-center text-[#8a8a8a]">
              <div className="mr-[4px] flex h-[13px] w-[13px] items-center justify-center bg-[#bdbdbd]">
                <svg width="10" height="10" viewBox="0 0 10 10" fill="none"><path d="M1.500 5l2.500 2.500L8.500 2.500" stroke="#f4f4f4" strokeWidth="1.400" /></svg>
              </div>
              Lock aspect ratio
            </div>
          </div>
        </div>
      </div>

      {/* status bar */}
      <div className="mt-[6px] flex h-[26px] shrink-0 items-center border-t border-[#d5d5d5] pt-[2px] text-[#222]">
        <span className="w-[574px] pl-[6px]">(2126,654)</span>
        <div className="h-[20px] w-px bg-[#a8a8a8]" />
        <span className="ml-[7px] w-[94px]">numerosign --&gt;</span>
        <span>10 contours, 83 nodes</span>
        <div className="ml-auto h-[20px] w-px bg-[#a8a8a8]" />
        <span className="ml-[41px] mr-[21px]">Contour mode</span>
      </div>
    </div>
  );
}

function CloseTab() {
  return (
    <svg width="9" height="9" viewBox="0 0 9 9" fill="none">
      <path d="M1 1l7 7M8 1L1 8" stroke="#666" />
    </svg>
  );
}

function Spin({ value, c = '' }: { value: string; c?: string }) {
  return (
    <div className={`flex h-[23px] items-center justify-end border-b border-[#9a9a9a] bg-white pr-[3px] ${c}`}>
      <span className="mr-[4px]">{value}</span>
      <div className="flex flex-col">
        <ChevronUp size={11} color="#333" strokeWidth={1.6} className="-mb-[2px]" />
        <ChevronDown size={11} color="#333" strokeWidth={1.6} className="-mt-[2px]" />
      </div>
    </div>
  );
}

function ToolBox({ children, c = '' }: { children: ReactNode; c?: string }) {
  return (
    <div className={`flex h-[23px] items-center justify-center rounded-[3px] border border-[#cfcfcf] bg-[#f5f5f5] text-[11px] text-[#444] ${c}`}>
      {children}
    </div>
  );
}
